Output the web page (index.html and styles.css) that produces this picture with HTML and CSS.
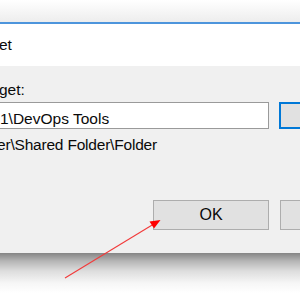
FILE: index.html
```html
<!DOCTYPE html>
<html>
<head>
<meta charset="utf-8">
<link rel="stylesheet" href="styles.css">
</head>
<body>
<div class="dialog">
  <div class="titlebar"></div>
  <div class="header"><span class="title">et</span></div>
  <div class="content">
    <div class="label">get:</div>
    <div class="row">
      <div class="input">1\DevOps Tools</div>
      <div class="browse"></div>
    </div>
    <div class="path">er\Shared Folder\Folder</div>
    <div class="buttons">
      <div class="btn">OK</div>
      <div class="btn"></div>
    </div>
  </div>
</div>
<div class="shadow"></div>
<svg class="arrow" width="300" height="300" viewBox="0 0 300 300">
  <line x1="65" y1="278" x2="153" y2="224.5" stroke="#f23a3a" stroke-width="1.1"/>
  <polygon points="160.5,220 149.5,221.5 154,228.5" fill="#ff0000"/>
</svg>
</body>
</html>
```

FILE: styles.css
```css
html, body {
  margin: 0;
  padding: 0;
  background: #ffffff;
  overflow: hidden;
}
body {
  width: 300px;
  height: 300px;
  position: relative;
  font-family: "Liberation Sans", Arial, sans-serif;
  font-size: 15.5px;
  line-height: 18px;
  color: #0a0a0a;
}
.dialog {
  width: 300px;
  background: #f0f0f0;
}
.titlebar {
  height: 22px;
  background: linear-gradient(#ffffff, #ededed);
  border-bottom: 2px solid #4d95dc;
}
.header {
  height: 30px;
  background: #ffffff;
  padding-top: 12px;
}
.title {
  margin-left: -1px;
}
.content {
  height: 172px;
  padding-top: 15px;
}
.label {
  margin-left: -1px;
}
.row {
  display: flex;
  gap: 10px;
  margin-top: 3px;
}
.input {
  width: 268px;
  height: 18px;
  padding-top: 7px;
  background: #ffffff;
  border: 1px solid #9a9a9a;
  border-left: none;
  white-space: nowrap;
}
.browse {
  flex: 1;
  height: 23px;
  background: #e1e1e1;
  border: 2px solid #0078d7;
  border-right: none;
}
.path {
  margin-top: 7px;
  margin-left: -3px;
  letter-spacing: -0.2px;
  white-space: nowrap;
}
.buttons {
  display: flex;
  gap: 11px;
  margin-top: 46px;
  padding-left: 153px;
}
.btn {
  width: 114px;
  height: 28px;
  line-height: 28px;
  font-size: 16px;
  text-align: center;
  background: #e1e1e1;
  border: 1px solid #adadad;
}
.btn + .btn {
  flex: 1;
  border-right: none;
}
.shadow {
  height: 47px;
  background: linear-gradient(#858585 0px, #b5b5b5 8px, #dddddd 18px, #f6f6f6 30px, #ffffff 40px);
}
.arrow {
  position: absolute;
  left: 0;
  top: 0;
}
```
